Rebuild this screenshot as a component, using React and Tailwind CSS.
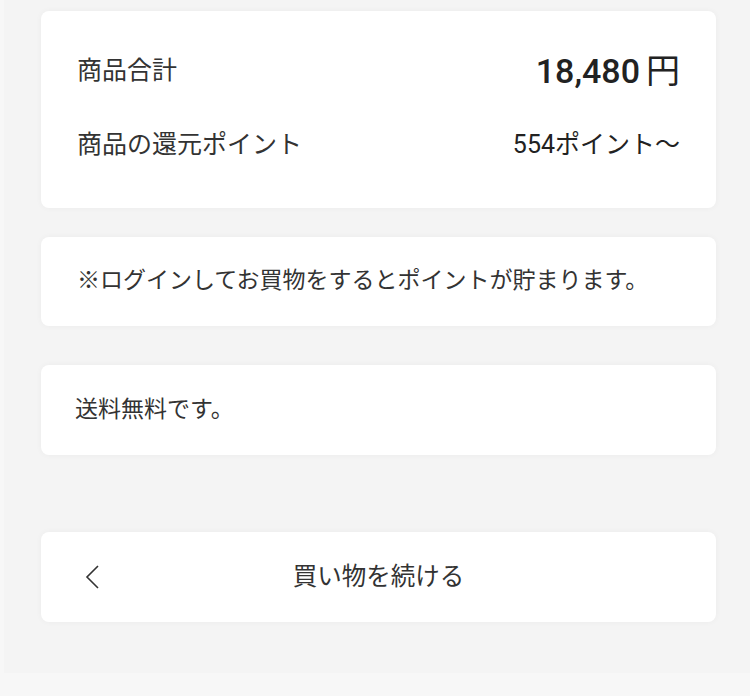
const font = { fontFamily: 'Roboto, "Noto Sans CJK JP", sans-serif' };

function Card({ className = "", children }) {
  return (
    <div
      className={`rounded-[8px] bg-white shadow-[0_0_6px_rgba(0,0,0,0.04)] ${className}`}
    >
      {children}
    </div>
  );
}

export default function App() {
  return (
    <div className="min-h-[696px] w-[750px] bg-[#f7f7f7]" style={font}>
      <div className="ml-[4px] flex h-[673px] flex-col bg-[#f4f4f4] pl-[37px] pr-[34px] pt-[11px] text-[#333]">
        <Card className="flex h-[197px] flex-col gap-[34px] px-[36px] pt-[40px]">
          <div className="flex h-[40px] items-center justify-between">
            <span className="text-[25px]">商品合計</span>
            <span className="flex items-baseline text-[#222]">
              <span className="text-[34px] font-medium">18,480</span>
              <span className="ml-[6px] text-[34px]">円</span>
            </span>
          </div>
          <div className="flex h-[40px] items-center justify-between">
            <span className="text-[25px]">商品の還元ポイント</span>
            <span className="text-[25px] text-[#222]">554ポイント〜</span>
          </div>
        </Card>

        <Card className="mt-[29px] flex h-[89px] items-center px-[36px]">
          <p className="text-[23px]">
            ※ログインしてお買物をするとポイントが貯まります。
          </p>
        </Card>

        <Card className="mt-[39px] flex h-[90px] items-center px-[34px]">
          <p className="text-[23px]">送料無料です。</p>
        </Card>

        <Card className="relative mt-[77px] flex h-[90px] items-center justify-center">
          <svg
            className="absolute left-[42px] top-1/2 -translate-y-1/2"
            width="20"
            height="26"
            viewBox="0 0 20 26"
            fill="none"
            stroke="#333"
            strokeWidth="1.6"
          >
            <path d="M15 2 L4 13 L15 24" />
          </svg>
          <span className="text-[24.5px]">買い物を続ける</span>
        </Card>
      </div>
    </div>
  );
}
